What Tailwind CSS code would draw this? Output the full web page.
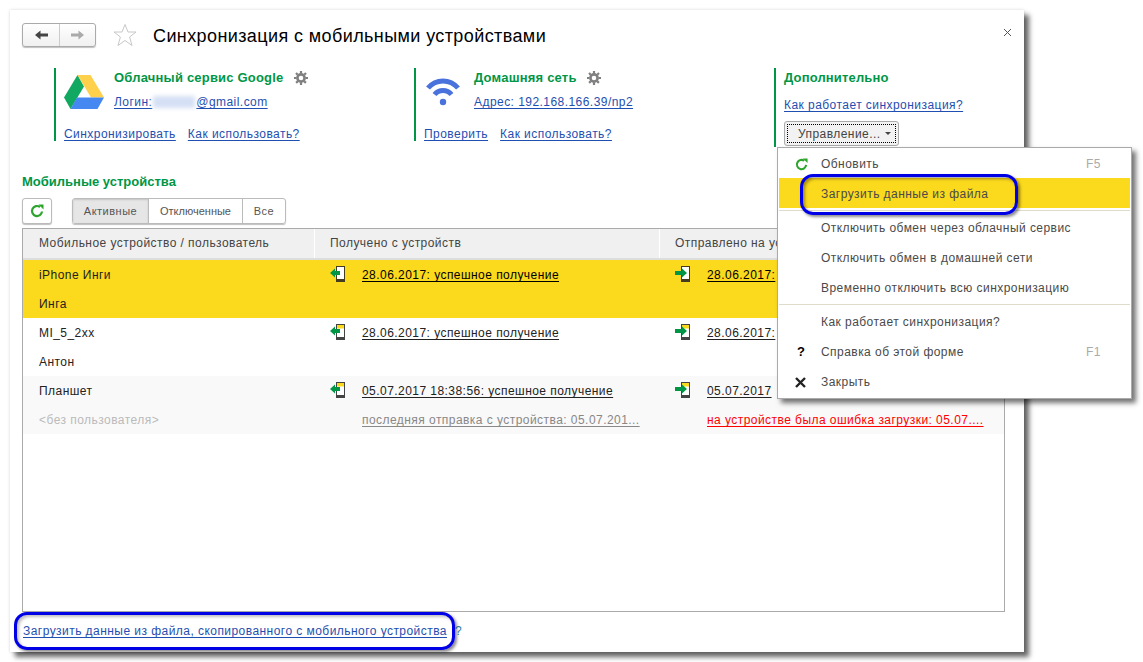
<!DOCTYPE html>
<html><head><meta charset="utf-8">
<script src="https://cdn.jsdelivr.net/npm/@tailwindcss/browser@4"></script>
</head>
<body class="bg-white w-[1143px] h-[662px] overflow-hidden relative font-['Liberation_Sans',Arial,sans-serif] text-[12px] tracking-[0.45px] text-[#333]">
<div class="absolute left-[10px] top-[10px] w-[1014px] h-[642px] bg-white shadow-[5px_5px_5px_rgba(0,0,0,0.6),0_0_3px_rgba(0,0,0,0.15)] pl-[12px] pt-[13px] pr-[20px]">
  <!-- header -->
  <div class="flex items-center h-[24px]">
    <div class="flex w-[74px] h-[24px] border border-[#aaa] rounded-[3px] bg-gradient-to-b from-white to-[#f0f0f0] shadow-[0_1px_1px_rgba(0,0,0,0.25)]">
      <div class="w-[37px] flex items-center justify-center border-r border-[#ccc]">
        <svg width="15" height="12" viewBox="0 0 15 12"><path d="M1 6 6.500 1.500V4.500H14V7.500H6.500V10.500Z" fill="#444"/></svg>
      </div>
      <div class="flex-1 flex items-center justify-center">
        <svg width="15" height="12" viewBox="0 0 15 12"><path d="M14 6 8.500 1.500V4.500H1V7.500H8.500V10.500Z" fill="#aaa"/></svg>
      </div>
    </div>
    <svg class="ml-[17px]" width="24" height="24" viewBox="0 0 24 24"><path d="M12 1.500 15 9H23L16.600 14 19 22.500 12 17.500 5 22.500 7.400 14 1 9H9Z" fill="#fff" stroke="#c8c8c8" stroke-width="1"/></svg>
    <div class="ml-[16px] pt-[1px] text-[18px] tracking-[0.4px] text-black leading-[24px]">Синхронизация с мобильными устройствами</div>
    <svg class="absolute left-[993px] top-[18px]" width="9" height="9" viewBox="0 0 9 9"><path d="M1 1 8 8M8 1 1 8" stroke="#555" stroke-width="1"/></svg>
  </div>
  <!-- panels -->
  <div class="flex mt-[21px] ml-[32px] h-[84px]">
    <div class="w-[360px] shrink-0 h-[73px] border-l-[2px] border-[#009646] pl-[8px] relative">
      <div class="flex">
        <svg class="mt-[7px]" width="40" height="35" viewBox="0 0 40 35">
          <path d="M13.500 0 0 22.500 6.500 34 20 11.500Z" fill="#11a861"/>
          <path d="M13.500 0H26.500L40 22.500H27Z" fill="#ffd04b"/>
          <path d="M6.500 34H33.500L40 22.500H13Z" fill="#4688f1"/>
        </svg>
        <div class="ml-[10px]">
          <div class="flex items-center h-[18px] mt-[1px]">
            <span class="font-bold text-[#009646] text-[13px] tracking-[0.2px]">Облачный сервис Google</span>
            <svg class="ml-[10px] -mt-[1px]" width="14" height="14" viewBox="0 0 14 14"><circle cx="7" cy="7" r="3.600" fill="none" stroke="#808080" stroke-width="2.600"/><path d="M7 0V14M0 7H14M2 2 12 12M12 2 2 12" stroke="#808080" stroke-width="2.200" stroke-dasharray="2.400 9.200 2.400"/></svg>
          </div>
          <div class="mt-[6px] h-[18px] leading-[18px] text-[#1f4fb0] underline underline-offset-2 whitespace-nowrap">Логин:<span class="inline-block w-[42px] h-[12px] mx-[1px] align-[-2px] bg-[#d5e0f5] blur-[2px]"></span>@gmail.com</div>
        </div>
      </div>
      <div class="flex gap-[12px] mt-[14px] text-[#1f4fb0] leading-[18px]"><span class="underline underline-offset-2">Синхронизировать</span><span class="underline underline-offset-2">Как использовать?</span></div>
    </div>
    <div class="w-[360px] shrink-0 h-[73px] border-l-[2px] border-[#009646] pl-[8px]">
      <div class="flex">
        <svg class="mt-[9px]" width="40" height="32" viewBox="0 0 40 32">
          <g fill="none" stroke="#4a72dc" stroke-width="5"><path d="M4 11C12 1.500 26 1.500 34 11"/><path d="M10.500 17.500C15 12 23 12 27.500 17.500"/></g>
          <circle cx="19" cy="25" r="3.200" fill="#4a72dc"/>
        </svg>
        <div class="ml-[10px]">
          <div class="flex items-center h-[18px] mt-[1px]">
            <span class="font-bold text-[#009646] text-[13px] tracking-[0.2px]">Домашняя сеть</span>
            <svg class="ml-[10px] -mt-[1px]" width="14" height="14" viewBox="0 0 14 14"><circle cx="7" cy="7" r="3.600" fill="none" stroke="#808080" stroke-width="2.600"/><path d="M7 0V14M0 7H14M2 2 12 12M12 2 2 12" stroke="#808080" stroke-width="2.200" stroke-dasharray="2.400 9.200 2.400"/></svg>
          </div>
          <div class="mt-[6px] h-[18px] leading-[18px] text-[#1f4fb0] underline underline-offset-2 whitespace-nowrap">Адрес: 192.168.166.39/np2</div>
        </div>
      </div>
      <div class="flex gap-[12px] mt-[14px] text-[#1f4fb0] leading-[18px]"><span class="underline underline-offset-2">Проверить</span><span class="underline underline-offset-2">Как использовать?</span></div>
    </div>
    <div class="w-[230px] shrink-0 h-[79px] border-l-[2px] border-[#009646] pl-[8px]">
      <div class="font-bold text-[#009646] text-[13px] tracking-[0.15px] h-[18px] mt-[1px] leading-[18px]">Дополнительно</div>
      <div class="mt-[9px] text-[#1f4fb0] underline underline-offset-2 leading-[18px]">Как работает синхронизация?</div>
      <div class="mt-[7px] w-[115px] h-[25px] border border-[#aaa] rounded-[3px] bg-[#f2f2f2] p-[2px]">
        <div class="h-full border border-dotted border-black flex items-center pl-[10px] pr-[4px] justify-between text-[#444]"><span>Управление...</span><span class="w-0 h-0 border-x-[3px] border-x-transparent border-t-[3px] border-t-[#444]"></span></div>
      </div>
    </div>
  </div>
  <!-- devices -->
  <div class="font-bold text-[#009646] text-[13px] tracking-[0px] mt-[21px] h-[18px] leading-[18px]">Мобильные устройства</div>
  <div class="flex mt-[7px] h-[26px]">
    <div class="w-[30px] border border-[#bbb] rounded-[3px] flex items-center justify-center bg-white shadow-[0_1px_1px_rgba(0,0,0,0.25)]">
      <svg width="14" height="14" viewBox="0 0 14 14"><path d="M12 7.500A5 5 0 1 1 10 3" fill="none" stroke="#2da52d" stroke-width="2.200"/><path d="M8.500 0.500 13.500 0.500V5.500Z" fill="#2da52d"/></svg>
    </div>
    <div class="ml-[20px] flex h-[26px] border border-[#bbb] rounded-[3px] text-[11px] tracking-[0.5px] text-[#555] shadow-[0_1px_1px_rgba(0,0,0,0.25)]">
      <div class="w-[75px] flex items-center justify-center bg-[#e6e6e6] shadow-[inset_0_1px_2px_rgba(0,0,0,0.15)]">Активные</div>
      <div class="w-[94px] flex items-center justify-center border-l border-[#bbb] tracking-[0px]">Отключенные</div>
      <div class="w-[43px] flex items-center justify-center border-l border-[#bbb]">Все</div>
    </div>
  </div>
  <div class="mt-[4px] w-[983px] h-[384px] border border-[#aaa]">
    <div class="grid grid-cols-[292px_345px_1fr] h-[31px] bg-[#f0f0f0] border-b-[2px] border-[#ddd] leading-[29px]">
      <div class="pl-[16px] border-r border-white text-[#444]">Мобильное устройство / пользователь</div>
      <div class="pl-[15px] border-r border-white text-[#444]">Получено с устройств</div>
      <div class="pl-[15px] text-[#444]">Отправлено на устройства</div>
    </div>
    <!-- row 1 -->
    <div class="grid grid-cols-[292px_345px_1fr] h-[58px] pt-[1px] bg-[#fbd91d] text-[#222] leading-[29px]">
      <div class="pl-[16px]"><div>iPhone Инги</div><div>Инга</div></div>
      <div class="pl-[15px] flex">
        <svg class="mt-[5px]" width="16" height="16" viewBox="0 0 16 16"><rect x="6.500" y="0.500" width="8" height="15" fill="#fff" stroke="#443c20"/><rect x="6" y="13" width="9" height="3" fill="#443c20"/><path d="M0 7 5 2.500V5H10V9H5V11.500Z" fill="#009646"/></svg>
        <div class="ml-[16px] text-black underline underline-offset-2">28.06.2017: успешное получение</div>
      </div>
      <div class="pl-[15px] flex">
        <svg class="mt-[5px]" width="16" height="16" viewBox="0 0 16 16"><rect x="6.500" y="0.500" width="8" height="15" fill="#fff" stroke="#443c20"/><rect x="6" y="13" width="9" height="3" fill="#443c20"/><path d="M12 7 7 2.500V5H0V9H7V11.500Z" fill="#009646"/></svg>
        <div class="ml-[16px] text-black underline underline-offset-2">28.06.2017:</div>
      </div>
    </div>
    <!-- row 2 -->
    <div class="grid grid-cols-[292px_345px_1fr] h-[58px] pt-[1px] bg-white text-[#222] leading-[29px]">
      <div class="pl-[16px]"><div>MI_5_2xx</div><div>Антон</div></div>
      <div class="pl-[15px] flex">
        <svg class="mt-[5px]" width="16" height="16" viewBox="0 0 16 16"><rect x="6.500" y="0.500" width="8" height="15" fill="#fff" stroke="#444"/><rect x="7" y="1" width="7" height="3.500" fill="#fbd91d"/><rect x="6" y="13" width="9" height="3" fill="#444"/><path d="M0 7 5 2.500V5H10V9H5V11.500Z" fill="#009646"/></svg>
        <div class="ml-[16px] underline underline-offset-2">28.06.2017: успешное получение</div>
      </div>
      <div class="pl-[15px] flex">
        <svg class="mt-[5px]" width="16" height="16" viewBox="0 0 16 16"><rect x="6.500" y="0.500" width="8" height="15" fill="#fff" stroke="#444"/><rect x="7" y="1" width="7" height="3.500" fill="#fbd91d"/><rect x="6" y="13" width="9" height="3" fill="#444"/><path d="M12 7 7 2.500V5H0V9H7V11.500Z" fill="#009646"/></svg>
        <div class="ml-[16px] underline underline-offset-2">28.06.2017:</div>
      </div>
    </div>
    <!-- row 3 -->
    <div class="grid grid-cols-[292px_345px_1fr] h-[58px] pt-[1px] bg-[#f9f9f9] text-[#222] leading-[29px]">
      <div class="pl-[16px]"><div>Планшет</div><div class="text-[#bbb]">&lt;без пользователя&gt;</div></div>
      <div class="pl-[15px]">
        <div class="flex">
          <svg class="mt-[5px]" width="16" height="16" viewBox="0 0 16 16"><rect x="6.500" y="0.500" width="8" height="15" fill="#fff" stroke="#444"/><rect x="7" y="1" width="7" height="3.500" fill="#fbd91d"/><rect x="6" y="13" width="9" height="3" fill="#444"/><path d="M0 7 5 2.500V5H10V9H5V11.500Z" fill="#009646"/></svg>
          <div class="ml-[16px] underline underline-offset-2">05.07.2017 18:38:56: успешное получение</div>
        </div>
        <div class="ml-[32px] text-[#888] underline underline-offset-2">последняя отправка с устройства: 05.07.201...</div>
      </div>
      <div class="pl-[15px]">
        <div class="flex">
          <svg class="mt-[5px]" width="16" height="16" viewBox="0 0 16 16"><rect x="6.500" y="0.500" width="8" height="15" fill="#fff" stroke="#444"/><rect x="7" y="1" width="7" height="3.500" fill="#fbd91d"/><rect x="6" y="13" width="9" height="3" fill="#444"/><path d="M12 7 7 2.500V5H0V9H7V11.500Z" fill="#009646"/></svg>
          <div class="ml-[16px] underline underline-offset-2">05.07.2017</div>
        </div>
        <div class="ml-[32px] text-[#f00] underline underline-offset-2">на устройстве была ошибка загрузки: 05.07....</div>
      </div>
    </div>
  </div>
  <div class="mt-[10px] ml-[1px] leading-[18px]"><span class="text-[#1f4fb0] underline underline-offset-2">Загрузить данные из файла, скопированного с мобильного устройства</span><span class="ml-[8px] text-[#2a7fb0]">?</span></div>
</div>

<!-- popup menu -->
<div class="absolute left-[777px] top-[147px] w-[355px] h-[252px] bg-white border border-[#aaa] shadow-[4px_4px_5px_rgba(0,0,0,0.55)] text-[#4a4a4a] px-[1px]">
  <div class="flex items-center h-[30px] pt-[2px] relative"><svg class="absolute left-[16px]" width="13" height="13" viewBox="0 0 14 14"><path d="M12 7.500A5 5 0 1 1 10 3" fill="none" stroke="#2da52d" stroke-width="2.200"/><path d="M8.500 0.500 13.500 0.500V5.500Z" fill="#2da52d"/></svg><span class="pl-[42px]">Обновить</span><span class="ml-auto mr-[29px] text-[#aaa]">F5</span></div>
  <div class="flex items-center h-[30px] pt-[2px] bg-[#fbd91d] pl-[42px]">Загрузить данные из файла</div>
  <div class="h-[3px] border-b border-[#e0dccc] mb-[1px]"></div>
  <div class="flex items-center h-[30px] pt-[2px] pl-[42px]">Отключить обмен через облачный сервис</div>
  <div class="flex items-center h-[30px] pt-[2px] pl-[42px]">Отключить обмен в домашней сети</div>
  <div class="flex items-center h-[30px] pt-[2px] pl-[42px]">Временно отключить всю синхронизацию</div>
  <div class="h-[3px] border-b border-[#e0dccc] mb-[1px]"></div>
  <div class="flex items-center h-[30px] pt-[2px] pl-[42px]">Как работает синхронизация?</div>
  <div class="flex items-center h-[30px] pt-[2px] relative"><span class="absolute left-[18px] font-bold text-[13px] text-black">?</span><span class="pl-[42px]">Справка об этой форме</span><span class="ml-auto mr-[29px] text-[#aaa]">F1</span></div>
  <div class="flex items-center h-[30px] pt-[2px] relative"><svg class="absolute left-[16px]" width="11" height="11" viewBox="0 0 11 11"><path d="M1 1 10 10M10 1 1 10" stroke="#222" stroke-width="2.400"/></svg><span class="pl-[42px]">Закрыть</span></div>
</div>

<!-- callouts -->
<div class="absolute left-[800px] top-[174px] w-[218px] h-[41px] rounded-[13px] border-[3px] border-[#0000e6] shadow-[2px_2px_3px_rgba(0,0,0,0.45),inset_2px_2px_3px_rgba(0,0,0,0.35)]"></div>
<div class="absolute left-[14px] top-[612px] w-[441px] h-[38px] rounded-[13px] border-[3px] border-[#0000e6] shadow-[2px_2px_3px_rgba(0,0,0,0.45),inset_2px_2px_3px_rgba(0,0,0,0.25)]"></div>
</body></html>
